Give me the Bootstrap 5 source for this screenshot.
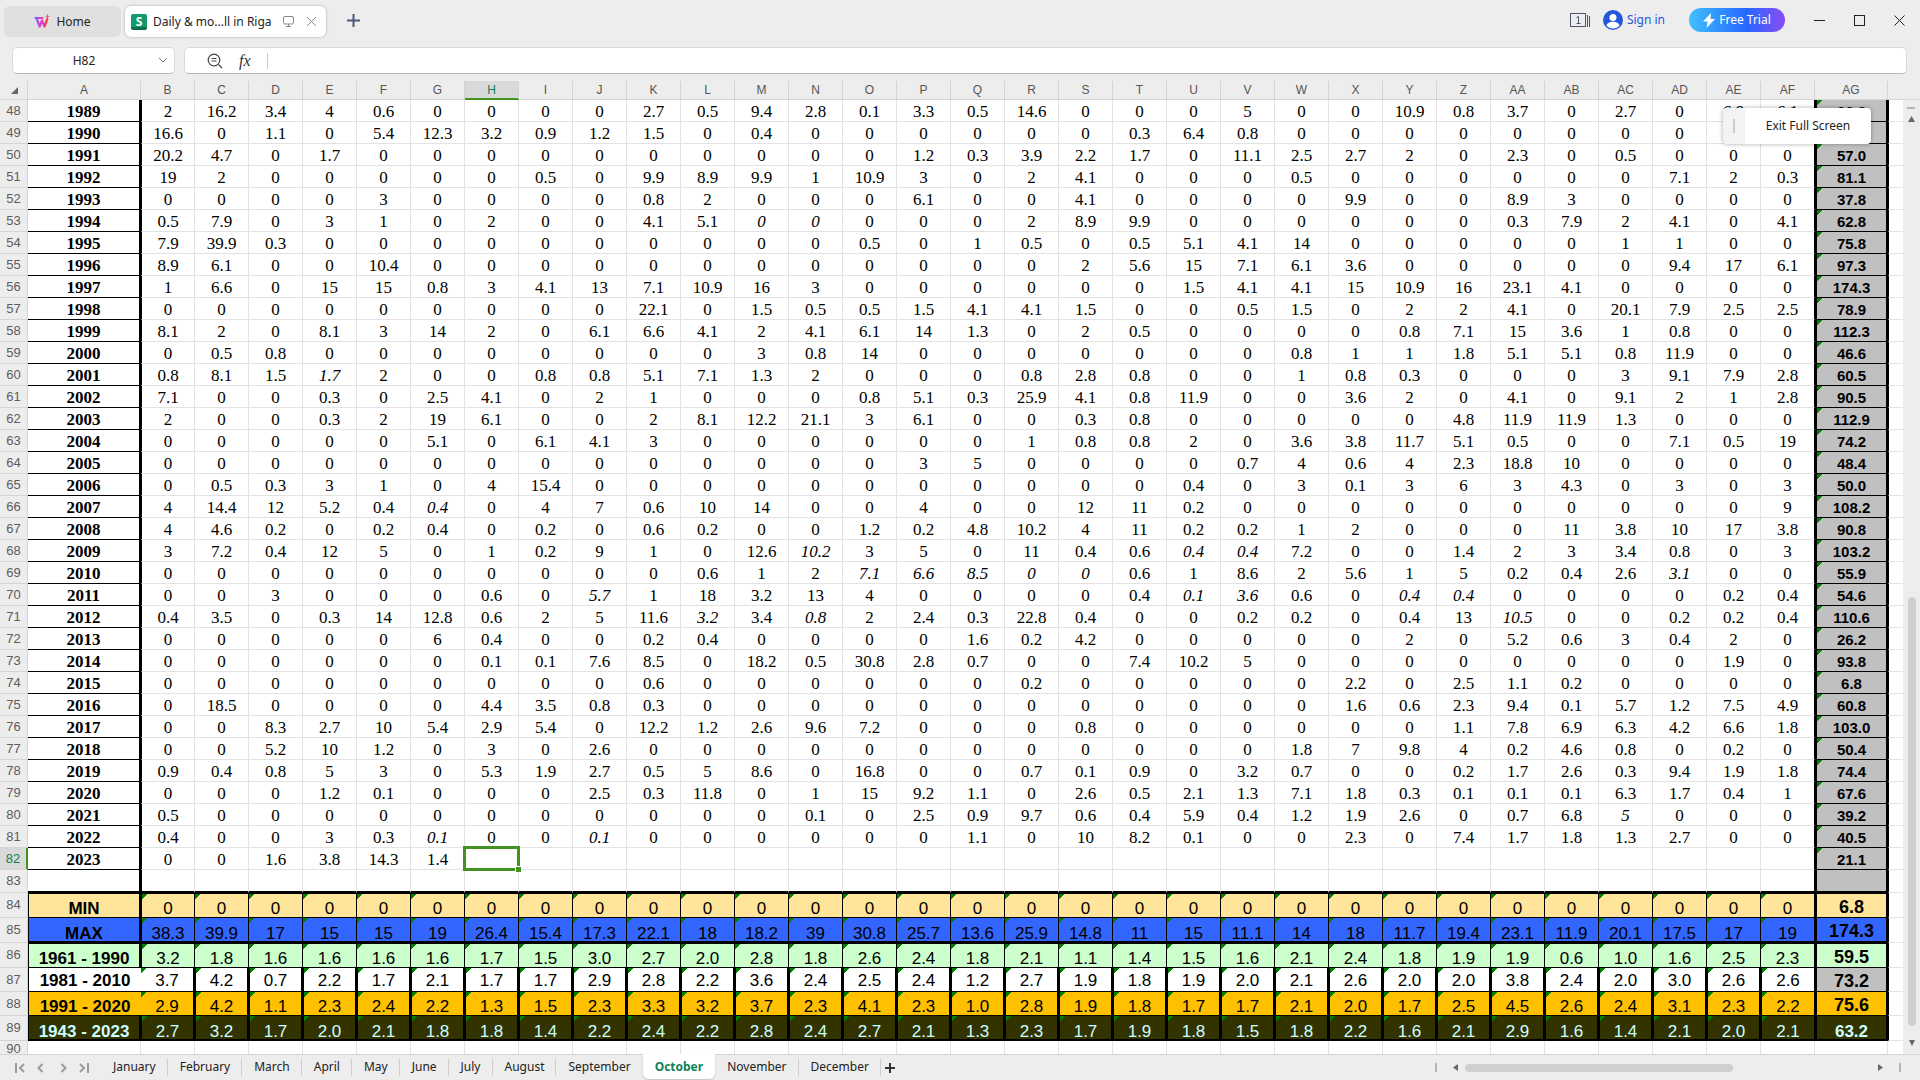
<!DOCTYPE html>
<html lang="en">
<head>
<meta charset="utf-8">
<meta name="viewport" content="width=device-width, initial-scale=1">
<title>Daily &amp; monthly rainfall in Riga</title>
<link href="https://cdn.jsdelivr.net/npm/bootstrap@5.3.0/dist/css/bootstrap.min.css" rel="stylesheet">
<style>
  body { background: #ededed; font-family: "Noto Sans", "Open Sans", sans-serif; font-size: 12px; color: #222; }
  button, input { font: inherit; color: inherit; }
  .plain { border: 0; background: none; padding: 0; line-height: 1; }
  svg { display: block; }

  /* title bar */
  .title-row { height: 40px; padding: 6px 15px 0 4px; }
  .doc-tab { height: 31px; border-radius: 6px; }
  .tab-home { width: 117px; background: #e0e0e0; margin-right: 4px; gap: 6px; }
  .tab-doc { width: 201px; background: #fff; box-shadow: 0 0 3px rgba(0,0,0,.28); padding: 0 9px 0 6px; gap: 6px; }
  .app-s { width: 16px; height: 16px; border-radius: 2px; background: linear-gradient(#129a68 13px, #0b6e4a 13px); color: #fff; font-weight: 700; line-height: 15px; text-align: center; }
  .new-tab { margin: 8px 0 0 21px; }
  .win-tools { height: 28px; }
  .sign-in { color: #2456dc; text-decoration: none; margin-left: 12px; }
  .trial { width: 96px; height: 24px; border-radius: 12px; color: #fff; background: linear-gradient(90deg, #41bfff, #2668ff 60%, #8a4cf5); }
  .win-btn { margin-left: 29px; }

  /* formula bar */
  .formula-row { padding: 7px 13px 7px 12px; gap: 9px; }
  .field-box { height: 27px; background: #fff; border: 1px solid #dadada; border-bottom-color: #b9b9b9; border-radius: 5px; }
  .name-field { width: 163px; }
  .name-field input { border: 0; background: none; text-align: center; width: 142px; margin-right: 3px; outline: 0; }
  .formula-box { padding-left: 22px; }
  .fx { font: italic 16px/20px "Liberation Serif", serif; color: #333; }
  .fx-rule { width: 1px; height: 16px; background: #ccc; }
  .formula-input { border: 0; outline: 0; background: none; }

  /* sheet */
  .sheet-wrap { flex: 1 1 0; min-height: 0; overflow: hidden; border-bottom: 1px solid #d4d4d4; }
  .sheet { table-layout: fixed; width: 100%; border-collapse: separate; border-spacing: 0; background: #fff; text-align: center; font-family: "Liberation Serif", serif; font-size: 17px; line-height: 18px; color: #000; }
  .sheet th, .sheet td { padding: 0; height: 22px; border: 0 solid #e2e2e2; border-width: 0 1px 1px 0; white-space: nowrap; position: relative; }
  .sheet .year, .sheet .day { padding-top: 2px; }
  .sheet thead th { height: 19px; background: #ededed; border-color: #d4d4d4; font: 12px/16px "Liberation Sans", sans-serif; color: #555; }
  .sheet thead th:last-child, .sheet td:last-child { border-right: 0; }
  .sheet .row-no { background: #ededed; border-color: #d4d4d4; font: 13px/14px "Liberation Sans", sans-serif; color: #5c5c5c; }
  .sheet thead .picked { background: #d9d9d9; color: #0d7f56; border-bottom: 2px solid #439321; }
  .sheet .row-no.picked { background: #d9d9d9; color: #0d7f56; border-right: 2px solid #439321; }
  .sheet .corner-cell svg { margin: 1px 0 0 11px; }
  .sheet .year { font-weight: 700; border-right: 2px solid #000; border-bottom-color: #000; }
  .sheet .first { border-left: 1px solid #000; }
  .sheet .last-day { border-right: 1px solid #000; }
  .sheet .total { font: 700 15px/18px "Liberation Sans", sans-serif; background-color: #c0c0c0; border: solid #000; border-width: 0 2px 1px 2px; padding-top: 3px; }
  .sheet .filler { border-left: 1px solid #000; }
  .flagged { background-image: linear-gradient(135deg, #008000 4px, transparent 4px); }

  .sheet .gap-row > * { height: 23px; }
  .sheet .gap-row .year, .sheet .gap-row .day, .sheet .gap-row .total { border-bottom: 2px solid #000; }
  .sheet .stat > * { height: 25px; }
  .sheet .stat .year, .sheet .stat .day { font-family: "Liberation Sans", sans-serif; line-height: 16px; vertical-align: bottom; border-color: #000; background-color: var(--tone); }
  .sheet .stat .year { border-left: 1px solid #000; }
  .sheet .stat .total { font-size: 18px; background-color: var(--tone); padding-top: 2px; }
  .sheet .s-min .year, .sheet .s-min .day, .sheet .s-min .total,
  .sheet .s-1961 .year, .sheet .s-1961 .day, .sheet .s-1961 .total { border-top: 1px solid #000; }
  .sheet .s-max .year, .sheet .s-max .day, .sheet .s-max .total,
  .sheet .s-all .year, .sheet .s-all .day, .sheet .s-all .total { border-bottom-width: 2px; }
  .sheet .s-max .year, .sheet .s-max .day,
  .sheet .s-all .year, .sheet .s-all .day { line-height: 14px; }
  .s-min { --tone: #ffe599; }
  .s-max { --tone: #3366ff; }
  .s-1961 { --tone: #ccffcc; }
  .s-1981 { --tone: #fff; }
  .s-1991 { --tone: #ffc000; }
  .s-all { --tone: #333300; }
  .sheet .s-1981 > *, .sheet .s-1991 > * { height: 24px; }
  .sheet .heavy .day { border-left: 1px solid #000; border-right-width: 2px; }
  .sheet .heavy .last-day { border-right-width: 1px; }
  .sheet .s-1981 .year, .sheet .s-1981 .day { vertical-align: middle; padding-top: 3px; }
  .sheet .s-1981 .total { background-color: #c0c0c0; }
  .sheet .s-1981 .year, .sheet .s-1991 .year { border-right: 0; }
  .sheet .s-1981 .first, .sheet .s-1991 .first { border-left: 0; }
  .sheet .s-all .year, .sheet .s-all .day, .sheet .s-all .total { color: #ccffff; }
  .sheet .s-all .total { font-size: 17px; line-height: 14px; vertical-align: bottom; }
  .sheet .tail > * { height: 14px; line-height: 14px; border-bottom: 0; }
  .sheet .tail .row-no { padding-top: 1px; }

  .cell-frame { position: absolute; inset: -2px -2px -2px -2px; border: 3px solid #439321; z-index: 2; }
  .cell-frame::after { content: ""; position: absolute; right: -4px; bottom: -4px; width: 6px; height: 6px; background: #439321; border: solid #fff; border-width: 1px 0 0 1px; }

  .v-scroll { width: 17px; margin-top: 19px; padding: 7px 0 8px; background: #ededed; position: absolute; right: 0; top: 0; bottom: 0; }
  .v-thumb { width: 8px; flex: 427 1 0; border-radius: 4px; background: #cfcfcf; }
  .v-space { flex: 470 1 0; }
  .v-rest { flex: 14 1 0; }

  .exit-pop { position: absolute; top: 27px; right: 49px; width: 148px; height: 36px; background: #fff; border-radius: 4px; box-shadow: 0 0 4px rgba(0,0,0,.35); z-index: 3; overflow: hidden; }
  .grip { width: 22px; background: #f3f3f3; }
  .grip span { width: 2px; height: 14px; background: #ccc; }

  /* sheet tabs */
  .tabs-row { height: 25px; padding: 0 19px 0 15px; }
  .nav-steps { width: 86px; gap: 12px; color: #9b9b9b; }
  .sheet-tab { height: 24px; padding: 0 12px; position: relative; color: #222; }
  .sheet-tab::after { content: ""; position: absolute; right: 0; top: 4px; height: 17px; width: 1px; background: #cdcdcd; }
  .sheet-tab.current { height: 25px; margin-top: -1px; padding-top: 1px; background: #fff; color: #0d7f56; font-weight: 700; border-radius: 0 0 6px 6px; box-shadow: 0 1px 2px rgba(0,0,0,.2); }
  .sheet-tab.current::after, .before-current::after { display: none; }
  .h-scroll { width: 466px; }
  .tick { width: 2px; height: 9px; background: #b5b5b5; }
  .h-track { flex: 1; margin: 0 7px 0 4px; padding-left: 3px; }
  .h-thumb { width: 66%; height: 8px; border-radius: 4px; background: #cfcfcf; }
</style>
<script src="https://cdn.jsdelivr.net/npm/bootstrap@5.3.0/dist/js/bootstrap.bundle.min.js"></script>
</head>
<body class="vh-100 d-flex flex-column overflow-hidden">

<header class="title-row d-flex align-items-start">
  <button class="plain doc-tab tab-home d-flex align-items-center justify-content-center">
    <svg width="16" height="15" viewBox="0 0 16 15" fill="none" stroke-width="2.2" stroke-linejoin="round" stroke-linecap="round">
      <defs><linearGradient id="brand" x1="0" x2="1"><stop offset="0" stop-color="#7a5cff"/><stop offset=".5" stop-color="#e53fd0"/><stop offset="1" stop-color="#ff3b3b"/></linearGradient></defs>
      <path d="M1.500 4h7M2.500 4l3.200 8.500L8 6.500l2.500 6L13.300 5" stroke="url(#brand)"/>
      <path d="M13.500 .8v3M12 2.300h3" stroke="#ff4a7a" stroke-width="1"/>
    </svg>
    <span>Home</span>
  </button>
  <div class="doc-tab tab-doc d-flex align-items-center">
    <span class="app-s">S</span>
    <span class="flex-grow-1 text-nowrap">Daily &amp; mo...ll in Riga</span>
    <svg class="me-1" width="14" height="13" viewBox="0 0 14 13" fill="none" stroke="#888"><rect x="1.500" y="1.500" width="10" height="7.500" rx="1.500"/><path d="M6.500 9v2.500M4 11.500h5"/></svg>
    <button class="plain" aria-label="Close tab"><svg width="11" height="11" viewBox="0 0 11 11" stroke="#888"><path d="M1 1l9 9M10 1l-9 9"/></svg></button>
  </div>
  <button class="plain new-tab" aria-label="New tab"><svg width="13" height="13" viewBox="0 0 13 13" stroke="#4a5878" stroke-width="2"><path d="M6.500 0v13M0 6.500h13"/></svg></button>
  <div class="win-tools ms-auto d-flex align-items-center">
    <svg width="21" height="16" viewBox="0 0 21 16" fill="none" stroke="#4d5672"><rect x=".5" y="1.500" width="15" height="13"/><path d="M17.500 3v12M19.500 4v11M6.500 5.500l2-1v7M6.500 11.500h4"/></svg>
    <a href="#" class="sign-in d-flex align-items-center">
      <svg class="me-1" width="20" height="20" viewBox="0 0 20 20"><circle cx="10" cy="10" r="10" fill="#2456dc"/><circle cx="10" cy="7.500" r="3.500" fill="#fff"/><path d="M3.500 15.500c1-5 12-5 13 0-3 4-10 4-13 0z" fill="#fff"/></svg>
      <span>Sign in</span>
    </a>
    <button class="plain trial d-flex align-items-center justify-content-center gap-1 ms-4">
      <svg width="12" height="15" viewBox="0 0 12 15"><path d="M8 0L0 8.500h4.500L3.500 15 12 6H7.500z" fill="#fff"/></svg>
      <span>Free Trial</span>
    </button>
    <button class="plain win-btn" aria-label="Minimize"><svg width="11" height="11" viewBox="0 0 11 11" stroke="#222"><path d="M0 5.500h11"/></svg></button>
    <button class="plain win-btn" aria-label="Maximize"><svg width="11" height="11" viewBox="0 0 11 11" stroke="#222" fill="none"><rect x=".5" y=".5" width="10" height="10"/></svg></button>
    <button class="plain win-btn" aria-label="Close"><svg width="11" height="11" viewBox="0 0 11 11" stroke="#222"><path d="M.5 .5l10 10M10.500 .5l-10 10"/></svg></button>
  </div>
</header>

<div class="formula-row d-flex">
  <div class="field-box name-field d-flex align-items-center">
    <input aria-label="Name box" value="H82">
    <button class="plain" aria-label="Choose name"><svg width="10" height="7" viewBox="0 0 10 7" fill="none" stroke="#777"><path d="M1 1l4 4 4-4"/></svg></button>
  </div>
  <div class="field-box formula-box flex-grow-1 d-flex align-items-center">
    <svg width="16" height="16" viewBox="0 0 16 16" fill="none" stroke="#444" stroke-width="1.200"><circle cx="7" cy="7" r="5.800"/><path d="M11.500 11.500L15 15M4.500 5.500h5M4.500 8h5"/></svg>
    <span class="fx ms-3 me-3">fx</span>
    <span class="fx-rule"></span>
    <input class="formula-input flex-grow-1 ms-2" aria-label="Formula">
  </div>
</div>

<main class="sheet-wrap position-relative">
  <table class="sheet" id="sheet">
    <colgroup id="cols"></colgroup>
    <thead><tr id="letters"></tr></thead>
    <tbody id="grid"></tbody>
  </table>

  <div class="exit-pop d-flex">
    <div class="grip d-flex align-items-center justify-content-center"><span></span></div>
    <button class="plain flex-grow-1">Exit Full Screen</button>
  </div>

  <div class="v-scroll d-flex flex-column align-items-center">
    <svg width="9" height="18" viewBox="0 0 9 18"><path d="M0 0h8v2H0z" fill="#b5b5b5"/><path d="M1 15l3.500-6 3.500 6z" fill="#666"/></svg>
    <div class="v-space"></div>
    <div class="v-thumb"></div>
    <div class="v-rest"></div>
    <svg width="8" height="6" viewBox="0 0 8 6"><path d="M1 0h6L4 6z" fill="#666"/></svg>
  </div>
</main>

<footer class="tabs-row d-flex align-items-center">
  <div class="nav-steps d-flex align-items-center">
    <button class="plain" aria-label="First sheet"><svg width="10" height="10" viewBox="0 0 10 10" fill="none" stroke="currentColor" stroke-width="2"><path d="M1 0v10M9 1L5 5l4 4"/></svg></button>
    <button class="plain" aria-label="Previous sheet"><svg width="7" height="10" viewBox="0 0 7 10" fill="none" stroke="currentColor" stroke-width="2"><path d="M5.500 1l-4 4 4 4"/></svg></button>
    <button class="plain ms-1" aria-label="Next sheet"><svg width="7" height="10" viewBox="0 0 7 10" fill="none" stroke="currentColor" stroke-width="2"><path d="M1.500 1l4 4-4 4"/></svg></button>
    <button class="plain" aria-label="Last sheet"><svg width="10" height="10" viewBox="0 0 10 10" fill="none" stroke="currentColor" stroke-width="2"><path d="M9 0v10M1 1l4 4-4 4"/></svg></button>
  </div>
  <nav class="d-flex align-self-start" aria-label="Sheets">
    <button class="plain sheet-tab">January</button>
    <button class="plain sheet-tab">February</button>
    <button class="plain sheet-tab">March</button>
    <button class="plain sheet-tab">April</button>
    <button class="plain sheet-tab">May</button>
    <button class="plain sheet-tab">June</button>
    <button class="plain sheet-tab">July</button>
    <button class="plain sheet-tab">August</button>
    <button class="plain sheet-tab before-current">September</button>
    <button class="plain sheet-tab current">October</button>
    <button class="plain sheet-tab">November</button>
    <button class="plain sheet-tab">December</button>
  </nav>
  <button class="plain ms-1" aria-label="Add sheet"><svg width="10" height="10" viewBox="0 0 10 10" stroke="#333" stroke-width="2"><path d="M5 0v10M0 5h10"/></svg></button>
  <div class="h-scroll ms-auto d-flex align-items-center">
    <span class="tick"></span>
    <svg class="ms-3" width="5" height="7" viewBox="0 0 5 7"><path d="M5 0v7L0 3.500z" fill="#666"/></svg>
    <div class="h-track"><div class="h-thumb"></div></div>
    <svg class="me-3" width="5" height="7" viewBox="0 0 5 7"><path d="M0 0v7l5-3.500z" fill="#666"/></svg>
    <span class="tick"></span>
  </div>
</footer>

<script>
// Daily rainfall, one line per year: 31 October days, then the month total. A leading "i" marks an italic value.
const years = `
2 16.2 3.4 4 0.6 0 0 0 0 2.7 0.5 9.4 2.8 0.1 3.3 0.5 14.6 0 0 0 5 0 0 10.9 0.8 3.7 0 2.7 0 6.9 6.1 96.2
16.6 0 1.1 0 5.4 12.3 3.2 0.9 1.2 1.5 0 0.4 0 0 0 0 0 0 0.3 6.4 0.8 0 0 0 0 0 0 0 0 0 0 50.1
20.2 4.7 0 1.7 0 0 0 0 0 0 0 0 0 0 1.2 0.3 3.9 2.2 1.7 0 11.1 2.5 2.7 2 0 2.3 0 0.5 0 0 0 57.0
19 2 0 0 0 0 0 0.5 0 9.9 8.9 9.9 1 10.9 3 0 2 4.1 0 0 0 0.5 0 0 0 0 0 0 7.1 2 0.3 81.1
0 0 0 0 3 0 0 0 0 0.8 2 0 0 0 6.1 0 0 4.1 0 0 0 0 9.9 0 0 8.9 3 0 0 0 0 37.8
0.5 7.9 0 3 1 0 2 0 0 4.1 5.1 i0 i0 0 0 0 2 8.9 9.9 0 0 0 0 0 0 0.3 7.9 2 4.1 0 4.1 62.8
7.9 39.9 0.3 0 0 0 0 0 0 0 0 0 0 0.5 0 1 0.5 0 0.5 5.1 4.1 14 0 0 0 0 0 1 1 0 0 75.8
8.9 6.1 0 0 10.4 0 0 0 0 0 0 0 0 0 0 0 0 2 5.6 15 7.1 6.1 3.6 0 0 0 0 0 9.4 17 6.1 97.3
1 6.6 0 15 15 0.8 3 4.1 13 7.1 10.9 16 3 0 0 0 0 0 0 1.5 4.1 4.1 15 10.9 16 23.1 4.1 0 0 0 0 174.3
0 0 0 0 0 0 0 0 0 22.1 0 1.5 0.5 0.5 1.5 4.1 4.1 1.5 0 0 0.5 1.5 0 2 2 4.1 0 20.1 7.9 2.5 2.5 78.9
8.1 2 0 8.1 3 14 2 0 6.1 6.6 4.1 2 4.1 6.1 14 1.3 0 2 0.5 0 0 0 0 0.8 7.1 15 3.6 1 0.8 0 0 112.3
0 0.5 0.8 0 0 0 0 0 0 0 0 3 0.8 14 0 0 0 0 0 0 0 0.8 1 1 1.8 5.1 5.1 0.8 11.9 0 0 46.6
0.8 8.1 1.5 i1.7 2 0 0 0.8 0.8 5.1 7.1 1.3 2 0 0 0 0.8 2.8 0.8 0 0 1 0.8 0.3 0 0 0 3 9.1 7.9 2.8 60.5
7.1 0 0 0.3 0 2.5 4.1 0 2 1 0 0 0 0.8 5.1 0.3 25.9 4.1 0.8 11.9 0 0 3.6 2 0 4.1 0 9.1 2 1 2.8 90.5
2 0 0 0.3 2 19 6.1 0 0 2 8.1 12.2 21.1 3 6.1 0 0 0.3 0.8 0 0 0 0 0 4.8 11.9 11.9 1.3 0 0 0 112.9
0 0 0 0 0 5.1 0 6.1 4.1 3 0 0 0 0 0 0 1 0.8 0.8 2 0 3.6 3.8 11.7 5.1 0.5 0 0 7.1 0.5 19 74.2
0 0 0 0 0 0 0 0 0 0 0 0 0 0 3 5 0 0 0 0 0.7 4 0.6 4 2.3 18.8 10 0 0 0 0 48.4
0 0.5 0.3 3 1 0 4 15.4 0 0 0 0 0 0 0 0 0 0 0 0.4 0 3 0.1 3 6 3 4.3 0 3 0 3 50.0
4 14.4 12 5.2 0.4 i0.4 0 4 7 0.6 10 14 0 0 4 0 0 12 11 0.2 0 0 0 0 0 0 0 0 0 0 9 108.2
4 4.6 0.2 0 0.2 0.4 0 0.2 0 0.6 0.2 0 0 1.2 0.2 4.8 10.2 4 11 0.2 0.2 1 2 0 0 0 11 3.8 10 17 3.8 90.8
3 7.2 0.4 12 5 0 1 0.2 9 1 0 12.6 i10.2 3 5 0 11 0.4 0.6 i0.4 i0.4 7.2 0 0 1.4 2 3 3.4 0.8 0 3 103.2
0 0 0 0 0 0 0 0 0 0 0.6 1 2 i7.1 i6.6 i8.5 i0 i0 0.6 1 8.6 2 5.6 1 5 0.2 0.4 2.6 i3.1 0 0 55.9
0 0 3 0 0 0 0.6 0 i5.7 1 18 3.2 13 4 0 0 0 0 0.4 i0.1 i3.6 0.6 0 i0.4 i0.4 0 0 0 0 0.2 0.4 54.6
0.4 3.5 0 0.3 14 12.8 0.6 2 5 11.6 i3.2 3.4 i0.8 2 2.4 0.3 22.8 0.4 0 0 0.2 0.2 0 0.4 13 i10.5 0 0 0.2 0.2 0.4 110.6
0 0 0 0 0 6 0.4 0 0 0.2 0.4 0 0 0 0 1.6 0.2 4.2 0 0 0 0 0 2 0 5.2 0.6 3 0.4 2 0 26.2
0 0 0 0 0 0 0.1 0.1 7.6 8.5 0 18.2 0.5 30.8 2.8 0.7 0 0 7.4 10.2 5 0 0 0 0 0 0 0 0 1.9 0 93.8
0 0 0 0 0 0 0 0 0 0.6 0 0 0 0 0 0 0.2 0 0 0 0 0 2.2 0 2.5 1.1 0.2 0 0 0 0 6.8
0 18.5 0 0 0 0 4.4 3.5 0.8 0.3 0 0 0 0 0 0 0 0 0 0 0 0 1.6 0.6 2.3 9.4 0.1 5.7 1.2 7.5 4.9 60.8
0 0 8.3 2.7 10 5.4 2.9 5.4 0 12.2 1.2 2.6 9.6 7.2 0 0 0 0.8 0 0 0 0 0 0 1.1 7.8 6.9 6.3 4.2 6.6 1.8 103.0
0 0 5.2 10 1.2 0 3 0 2.6 0 0 0 0 0 0 0 0 0 0 0 0 1.8 7 9.8 4 0.2 4.6 0.8 0 0.2 0 50.4
0.9 0.4 0.8 5 3 0 5.3 1.9 2.7 0.5 5 8.6 0 16.8 0 0 0.7 0.1 0.9 0 3.2 0.7 0 0 0.2 1.7 2.6 0.3 9.4 1.9 1.8 74.4
0 0 0 1.2 0.1 0 0 0 2.5 0.3 11.8 0 1 15 9.2 1.1 0 2.6 0.5 2.1 1.3 7.1 1.8 0.3 0.1 0.1 0.1 6.3 1.7 0.4 1 67.6
0.5 0 0 0 0 0 0 0 0 0 0 0 0.1 0 2.5 0.9 9.7 0.6 0.4 5.9 0.4 1.2 1.9 2.6 0 0.7 6.8 i5 0 0 0 39.2
0.4 0 0 3 0.3 i0.1 0 0 i0.1 0 0 0 0 0 0 1.1 0 10 8.2 0.1 0 0 2.3 0 7.4 1.7 1.8 1.3 2.7 0 0 40.5
0 0 1.6 3.8 14.3 1.4 - - - - - - - - - - - - - - - - - - - - - - - - - 21.1`.trim().split('\n');

const stats = [
  ['MIN', 's-min', '0 0 0 0 0 0 0 0 0 0 0 0 0 0 0 0 0 0 0 0 0 0 0 0 0 0 0 0 0 0 0 6.8'],
  ['MAX', 's-max', '38.3 39.9 17 15 15 19 26.4 15.4 17.3 22.1 18 18.2 39 30.8 25.7 13.6 25.9 14.8 11 15 11.1 14 18 11.7 19.4 23.1 11.9 20.1 17.5 17 19 174.3'],
  ['1961 - 1990', 's-1961', '3.2 1.8 1.6 1.6 1.6 1.6 1.7 1.5 3.0 2.7 2.0 2.8 1.8 2.6 2.4 1.8 2.1 1.1 1.4 1.5 1.6 2.1 2.4 1.8 1.9 1.9 0.6 1.0 1.6 2.5 2.3 59.5'],
  ['1981 - 2010', 's-1981 heavy', '3.7 4.2 0.7 2.2 1.7 2.1 1.7 1.7 2.9 2.8 2.2 3.6 2.4 2.5 2.4 1.2 2.7 1.9 1.8 1.9 2.0 2.1 2.6 2.0 2.0 3.8 2.4 2.0 3.0 2.6 2.6 73.2'],
  ['1991 - 2020', 's-1991 heavy', '2.9 4.2 1.1 2.3 2.4 2.2 1.3 1.5 2.3 3.3 3.2 3.7 2.3 4.1 2.3 1.0 2.8 1.9 1.8 1.7 1.7 2.1 2.0 1.7 2.5 4.5 2.6 2.4 3.1 2.3 2.2 75.6'],
  ['1943 - 2023', 's-all heavy', '2.7 3.2 1.7 2.0 2.1 1.8 1.8 1.4 2.2 2.4 2.2 2.8 2.4 2.7 2.1 1.3 2.3 1.7 1.9 1.8 1.5 1.8 2.2 1.6 2.1 2.9 1.6 1.4 2.1 2.0 2.1 63.2']
];

const letter = n => n < 26 ? String.fromCharCode(65 + n) : 'A' + String.fromCharCode(39 + n);
const widths = [28, 113, ...Array(31).fill(54), 73];
document.getElementById('cols').innerHTML = widths.map(w => `<col style="width:${w}px">`).join('') + '<col>';

let head = '<th class="corner-cell" aria-label="Select all"><svg width="7" height="7" viewBox="0 0 7 7"><path d="M7 0v7H0z" fill="#666"/></svg></th>';
for (let i = 0; i < 33; i++) head += `<th scope="col"${i === 7 ? ' class="picked"' : ''}>${letter(i)}</th>`;
document.getElementById('letters').innerHTML = head + '<th></th>';

const edge = i => i === 0 ? ' first' : i === 30 ? ' last-day' : '';
const rowNo = (n, on) => `<th scope="row" class="row-no${on ? ' picked' : ''}">${n}</th>`;
let body = '';
years.forEach((line, r) => {
  const v = line.split(' ');
  body += `<tr>${rowNo(48 + r, r === 34)}<td class="year">${1989 + r}</td>`;
  for (let i = 0; i < 31; i++) {
    const t = v[i] === '-' ? '' : v[i][0] === 'i' ? `<em>${v[i].slice(1)}</em>` : v[i];
    body += `<td class="day${edge(i)}">${t}${r === 34 && i === 6 ? '<div class="cell-frame"></div>' : ''}</td>`;
  }
  body += `<td class="total flagged">${v[31]}</td><td class="filler"></td></tr>`;
});

body += `<tr class="gap-row">${rowNo(83)}<td class="year"></td>`;
for (let i = 0; i < 31; i++) body += `<td class="day${edge(i)}"></td>`;
body += '<td class="total"></td><td class="filler"></td></tr>';

stats.forEach(([name, cls, line], r) => {
  const v = line.split(' ');
  body += `<tr class="stat ${cls}">${rowNo(84 + r)}<td class="year">${name}</td>`;
  for (let i = 0; i < 31; i++) body += `<td class="day flagged${edge(i)}">${v[i]}</td>`;
  body += `<td class="total">${v[31]}</td><td class="filler"></td></tr>`;
});

body += `<tr class="tail">${rowNo(90)}${'<td></td>'.repeat(34)}</tr>`;
document.getElementById('grid').innerHTML = body;
</script>
</body>
</html>
